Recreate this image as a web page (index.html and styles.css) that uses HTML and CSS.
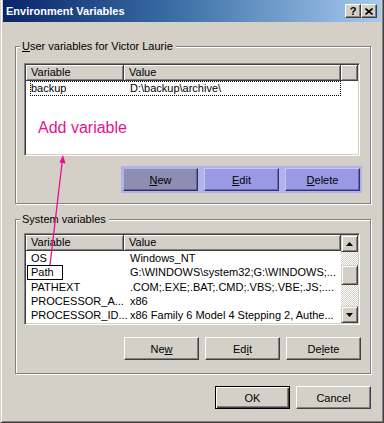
FILE: index.html
```html
<!DOCTYPE html>
<html lang="en">
<head>
  <meta charset="UTF-8" />
  <title>Environment Variables</title>
  <link rel="stylesheet" href="styles.css">
</head>
<body>
  <div class="window">
    <div class="titlebar">
      <span class="title">Environment Variables</span>
      <div class="caption-btns">
        <span class="cap-btn">?</span>
        <span class="cap-btn">
          <svg width="8" height="7" viewBox="0 0 8 7"><path d="M0.5 0.5 L7.5 6.5 M7.5 0.5 L0.5 6.5" stroke="#000" stroke-width="1.6" fill="none"/></svg>
        </span>
      </div>
    </div>

    <div class="content">
      <fieldset class="group group-user">
        <legend><u>U</u>ser variables for Victor Laurie</legend>
        <div class="listview lv-user">
          <div class="lv-head">
            <span class="hcell col-var">Variable</span>
            <span class="hcell col-val">Value</span>
            <span class="hcell col-rest"></span>
          </div>
          <div class="lv-row focused">
            <span class="cell col-var">backup</span>
            <span class="cell col-val">D:\backup\archive\</span>
          </div>
          <p class="note">Add variable</p>
        </div>
        <div class="btn-row hilite">
          <button class="btn purple pressed"><u>N</u>ew</button>
          <button class="btn purple"><u>E</u>dit</button>
          <button class="btn purple"><u>D</u>elete</button>
        </div>
      </fieldset>

      <fieldset class="group group-sys">
        <legend>System variables</legend>
        <div class="listview lv-sys">
          <div class="lv-main">
            <div class="lv-head">
              <span class="hcell col-var">Variable</span>
              <span class="hcell col-val">Value</span>
            </div>
            <div class="lv-row"><span class="cell col-var">OS</span><span class="cell col-val">Windows_NT</span></div>
            <div class="lv-row"><span class="cell col-var"><span class="boxed">Path</span></span><span class="cell col-val">G:\WINDOWS\system32;G:\WINDOWS;...</span></div>
            <div class="lv-row"><span class="cell col-var">PATHEXT</span><span class="cell col-val">.COM;.EXE;.BAT;.CMD;.VBS;.VBE;.JS;....</span></div>
            <div class="lv-row"><span class="cell col-var">PROCESSOR_A...</span><span class="cell col-val">x86</span></div>
            <div class="lv-row"><span class="cell col-var">PROCESSOR_ID...</span><span class="cell col-val">x86 Family 6 Model 4 Stepping 2, Authe...</span></div>
          </div>
          <div class="scrollbar">
            <span class="sb-btn"><svg width="7" height="4" viewBox="0 0 7 4"><path d="M3.5 0 L7 4 L0 4 Z" fill="#000"/></svg></span>
            <div class="sb-track"><span class="sb-thumb"></span></div>
            <span class="sb-btn"><svg width="7" height="4" viewBox="0 0 7 4"><path d="M0 0 L7 0 L3.5 4 Z" fill="#000"/></svg></span>
          </div>
        </div>
        <div class="btn-row">
          <button class="btn">Ne<u>w</u></button>
          <button class="btn">Ed<u>i</u>t</button>
          <button class="btn">De<u>l</u>ete</button>
        </div>
      </fieldset>

      <div class="btn-row dialog-btns">
        <button class="btn default">OK</button>
        <button class="btn">Cancel</button>
      </div>
    </div>

    <svg class="annotation" width="384" height="423" viewBox="0 0 384 423">
      <line x1="49" y1="265" x2="61.3" y2="161" stroke="#e8128c" stroke-width="1.3"/>
      <path d="M62 155 L64.6 163.4 L58.4 162.6 Z" fill="#e8128c"/>
    </svg>
  </div>
</body>
</html>
```

FILE: styles.css
```css
body {
  margin: 0;
  background-color: #d4d0c8;
  font-family: 'Liberation Sans', Arial, sans-serif;
  font-size: 11px;
  color: #000;
}
.window {
  position: relative;
  width: 384px;
  height: 423px;
  box-sizing: border-box;
  border-left: 1px solid #d4d0c8;
  border-right: 1px solid #404040;
  border-bottom: 1px solid #404040;
  box-shadow: inset 1px 0 #fff, inset -1px -1px #808080;
  padding: 0 2px 2px 2px;
}
.titlebar {
  height: 22px;
  display: flex;
  align-items: center;
  justify-content: space-between;
  padding: 0 4px 0 3px;
  background: linear-gradient(to right, #0a246a, #3a6ea5 45%, #a6caf0);
}
.title {
  color: #fff;
  font-weight: bold;
  font-size: 11px;
}
.caption-btns {
  display: flex;
}
.cap-btn {
  width: 16px;
  height: 14px;
  box-sizing: border-box;
  display: flex;
  align-items: center;
  justify-content: center;
  background: #d4d0c8;
  border: 1px solid;
  border-color: #fff #404040 #404040 #fff;
  box-shadow: inset -1px -1px #808080;
  font-weight: bold;
  font-size: 11px;
  line-height: 12px;
}
.content {
  padding: 0 10px 0 12px;
}
.group {
  margin: 18px 0 0;
  border: 1px solid #808080;
  box-shadow: inset 1px 1px #fff, 1px 1px #fff;
  min-width: 0;
}
.group-user {
  padding: 10px 9px 10px 8px;
}
.group-sys {
  margin-top: 9px;
  padding: 7px 9px 13px 8px;
}
legend {
  line-height: 13px;
  padding: 0 3px 0 2px;
  margin-left: -4px;
  background: #d4d0c8;
}
.listview {
  width: 336px;
  box-sizing: border-box;
  background: #fff;
  border: 1px solid;
  border-color: #808080 #fff #fff #808080;
  padding: 1px;
  box-shadow: inset 1px 1px #404040, inset -1px -1px #d4d0c8;
}
.lv-user { height: 93px; }
.lv-sys {
  height: 92px;
  display: flex;
}
.lv-main { flex: 1; }
.lv-head {
  display: flex;
  height: 16px;
}
.hcell {
  box-sizing: border-box;
  height: 16px;
  line-height: 15px;
  padding-left: 5px;
  background: #d4d0c8;
  border-right: 1px solid #404040;
  border-bottom: 1px solid #404040;
  box-shadow: inset 1px 1px #fff, inset -1px -1px #808080;
  white-space: nowrap;
}
.hcell.col-var { width: 98px; }
.hcell.col-val { width: 217px; }
.lv-sys .hcell.col-val { width: auto; flex: 1; }
.hcell.col-rest { flex: 1; }
.lv-row {
  display: flex;
  height: 14.3px;
  line-height: 14px;
  white-space: nowrap;
}
.cell.col-var {
  width: 98px;
  box-sizing: border-box;
  padding-left: 5px;
}
.cell.col-val { padding-left: 6px; }
.lv-row.focused {
  box-sizing: border-box;
  width: 311px;
  height: 15px;
  margin-left: 4px;
  border: 1px dotted #000;
  line-height: 13px;
}
.lv-row.focused .col-var {
  width: 93px;
  padding-left: 0;
}
.boxed {
  display: inline-block;
  box-sizing: border-box;
  height: 15px;
  line-height: 13px;
  margin-left: -4px;
  padding: 0 8px 0 3px;
  border: 1px solid #000;
}
.note {
  margin: 23px 0 0 12px;
  font-size: 16px;
  line-height: 18px;
  color: #e8128c;
}
.scrollbar {
  width: 17px;
  display: flex;
  flex-direction: column;
}
.sb-btn, .sb-thumb {
  display: flex;
  align-items: center;
  justify-content: center;
  box-sizing: border-box;
  width: 17px;
  height: 17px;
  background: #d4d0c8;
  border: 1px solid;
  border-color: #d4d0c8 #404040 #404040 #d4d0c8;
  box-shadow: inset 1px 1px #fff, inset -1px -1px #808080;
}
.sb-track {
  flex: 1;
  background-image: conic-gradient(#fff 25%, #d4d0c8 0 50%, #fff 0 75%, #d4d0c8 0);
  background-size: 2px 2px;
  padding-top: 13px;
}
.sb-thumb { height: 20px; }
.btn-row {
  display: flex;
  justify-content: flex-end;
  gap: 6px;
  margin-top: 12px;
}
.btn {
  width: 75px;
  height: 23px;
  box-sizing: border-box;
  padding: 0;
  background: #d4d0c8;
  border: 1px solid;
  border-color: #fff #404040 #404040 #fff;
  box-shadow: inset -1px -1px #808080;
  font-family: 'Liberation Sans', Arial, sans-serif;
  font-size: 11px;
  color: #000;
}
.btn.default {
  border: 1px solid #000;
  box-shadow: inset 1px 1px #fff, inset -1px -1px #404040, inset -2px -2px #808080;
}
.btn-row.hilite {
  width: fit-content;
  margin: 10px -1px 0 auto;
  padding: 2px;
  background: #b2b2ee;
}
.btn.purple {
  background: #9a9ae4;
  border-color: #c4c4f6 #34346e #34346e #c4c4f6;
  box-shadow: inset -1px -1px #6a6ab0;
}
.btn.purple.pressed {
  background: #8e8eb2;
  border-color: #b4b4d8 #303060 #303060 #b4b4d8;
  box-shadow: inset -1px -1px #64648c;
}
.dialog-btns { margin-top: 12px; }
.annotation {
  position: absolute;
  left: 0;
  top: 0;
  pointer-events: none;
}
```
